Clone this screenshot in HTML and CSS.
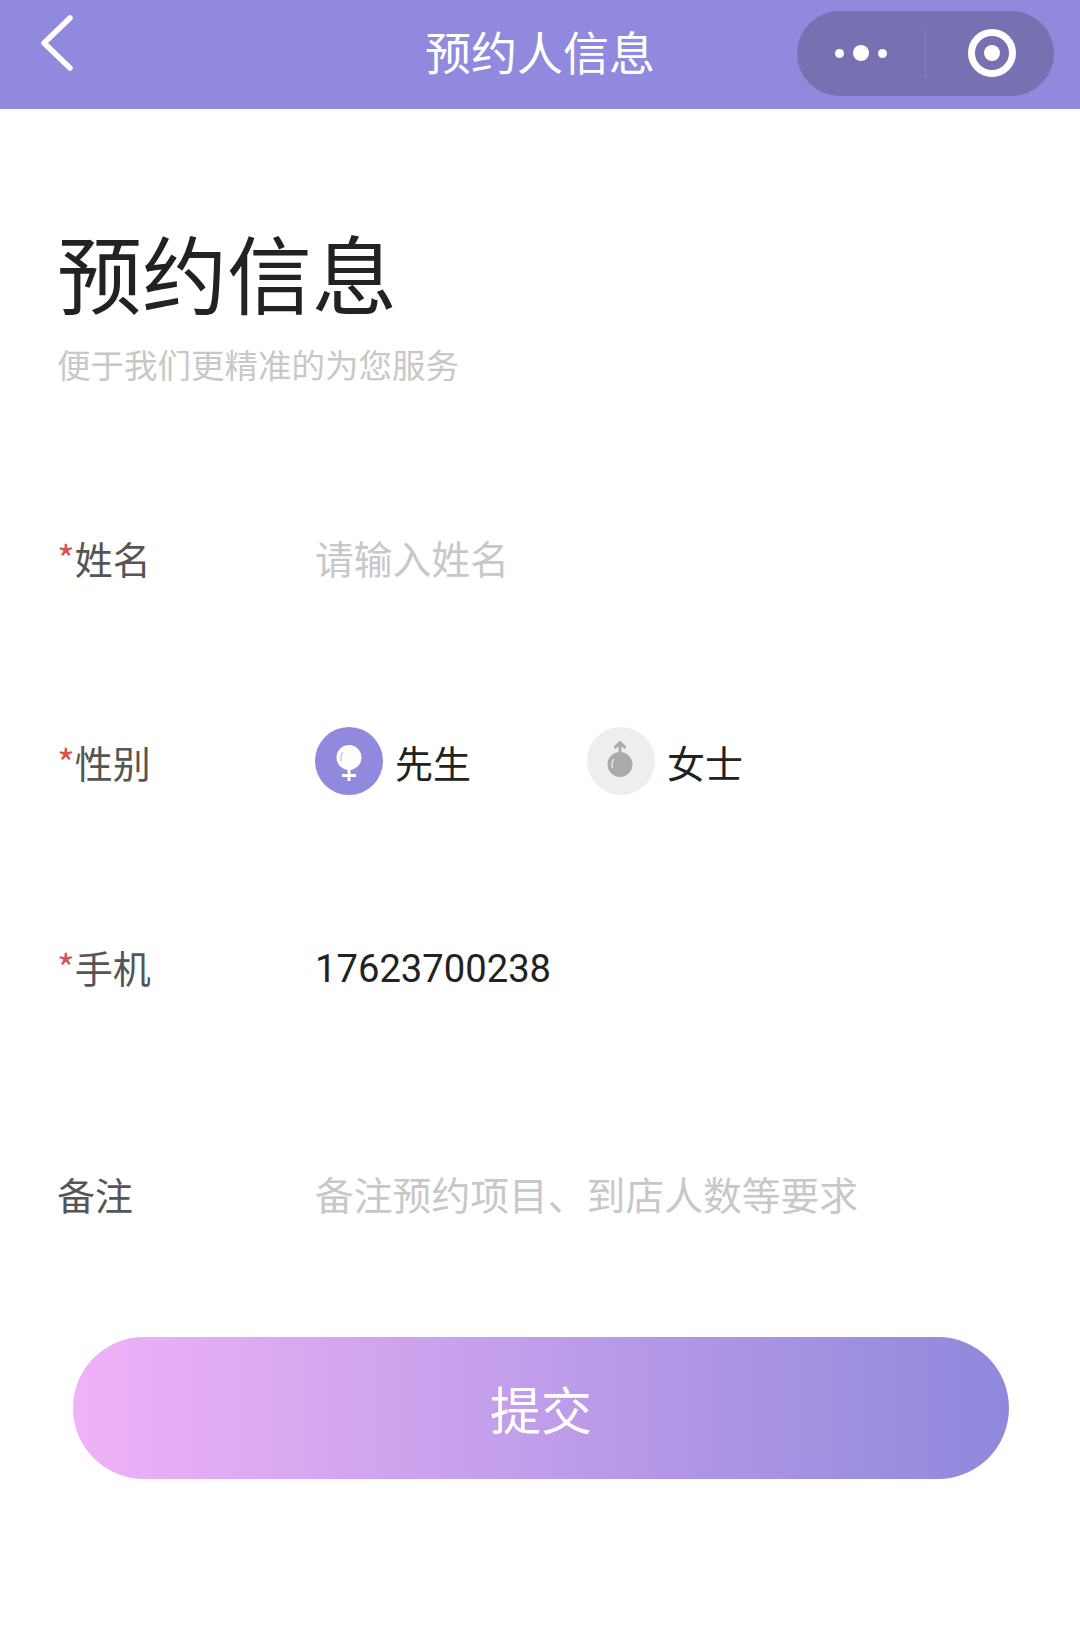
FILE: index.html
```html
<!DOCTYPE html>
<html>
<head>
    <meta charset="utf-8">
    <link rel="stylesheet" href="styles.css">
</head>
<body>
    <div class="nav-bar">
        <svg class="back-icon" width="32" height="56" viewBox="0 0 32 56">
            <path d="M29 3 L3 28 L29 53"/>
        </svg>
        <div class="nav-title">预约人信息</div>
        <div class="capsule">
            <div class="capsule-dots">
                <span class="dot"></span>
                <span class="dot dot-big"></span>
                <span class="dot"></span>
            </div>
            <div class="capsule-line"></div>
            <div class="capsule-close">
                <span class="close-inner"></span>
            </div>
        </div>
    </div>

    <div class="intro">
        <h1>预约信息</h1>
        <p>便于我们更精准的为您服务</p>
    </div>

    <div class="form">
        <div class="form-row row-name">
            <label><span class="required-tag">*</span>姓名</label>
            <div class="placeholder">请输入姓名</div>
        </div>
        <div class="form-row row-gender">
            <label><span class="required-tag">*</span>性别</label>
            <div class="gender-list">
                <div class="gender-item">
                    <span class="gender-icon active">
                        <svg class="female-icon" width="28" height="36" viewBox="0 0 28 36">
                            <circle cx="14" cy="12.5" r="12.5" fill="#fff"/>
                            <path d="M14 24 V36 M7 30.5 H21" stroke="#fff" stroke-width="3" fill="none"/>
                            <path d="M6.5 16 Q5 11 8 7" stroke="#c9c4ee" stroke-width="1.5" fill="none"/>
                        </svg>
                    </span>
                    <span>先生</span>
                </div>
                <div class="gender-item">
                    <span class="gender-icon">
                        <svg class="male-icon" width="28" height="36" viewBox="0 0 28 36">
                            <circle cx="14" cy="23.5" r="12.5" fill="#aaa"/>
                            <path d="M14 12 V2 M8.5 7 L14 1.5 L19.5 7" stroke="#aaa" stroke-width="3" fill="none"/>
                            <path d="M6.5 27 Q5 22 8 18" stroke="#e6e6e6" stroke-width="1.5" fill="none"/>
                        </svg>
                    </span>
                    <span>女士</span>
                </div>
            </div>
        </div>
        <div class="form-row row-phone">
            <label><span class="required-tag">*</span>手机</label>
            <div class="value">17623700238</div>
        </div>
        <div class="form-row row-remark">
            <label>备注</label>
            <div class="placeholder">备注预约项目、到店人数等要求</div>
        </div>
    </div>

    <button class="submit-btn">提交</button>
</body>
</html>
```

FILE: styles.css
```css
body {
    margin: 0;
    height: 1652px;
    overflow: hidden;
    background: #fff;
    font-family: "Noto Sans CJK SC", "Noto Sans", sans-serif;
    color: #222;
}

.nav-bar {
    position: relative;
    display: flex;
    align-items: center;
    justify-content: space-between;
    box-sizing: border-box;
    height: 109px;
    padding: 0 26px 0 41px;
    background: #9089de;
}

.back-icon {
    align-self: flex-start;
    margin-top: 15px;
}

.back-icon path {
    fill: none;
    stroke: #fff;
    stroke-width: 5.5;
    stroke-linecap: round;
    stroke-linejoin: round;
}

.nav-title {
    position: absolute;
    left: 0;
    right: 0;
    top: 19px;
    text-align: center;
    font-size: 46px;
    line-height: 62px;
    color: #fff;
}

.capsule {
    display: flex;
    align-items: center;
    width: 257px;
    height: 85px;
    margin-top: -3px;
    border-radius: 43px;
    background: #7771b1;
}

.capsule-dots {
    display: flex;
    align-items: center;
    justify-content: center;
    gap: 9px;
    width: 128px;
}

.dot {
    width: 9px;
    height: 9px;
    border-radius: 50%;
    background: #fff;
}

.dot-big {
    width: 16px;
    height: 16px;
}

.capsule-line {
    width: 1px;
    height: 50px;
    background: #8680bf;
}

.capsule-close {
    display: flex;
    align-items: center;
    justify-content: center;
    flex: 1;
    padding-left: 4px;
}

.close-inner {
    box-sizing: border-box;
    width: 48px;
    height: 48px;
    border: 7px solid #fff;
    border-radius: 50%;
    position: relative;
}

.close-inner::after {
    content: "";
    position: absolute;
    left: 9px;
    top: 9px;
    width: 16px;
    height: 16px;
    border-radius: 50%;
    background: #fff;
}

.intro {
    padding: 101px 0 0 57px;
}

.intro h1 {
    margin: 0;
    font-size: 85px;
    font-weight: 400;
    line-height: 122px;
    color: #222;
}

.intro p {
    margin: 7px 0 0;
    font-size: 33.5px;
    line-height: 50px;
    color: #c8c8c8;
}

.form {
    padding: 134px 0 0 57px;
}

.form-row {
    display: flex;
    align-items: center;
    height: 68px;
}

.row-gender {
    margin-top: 136px;
}

.row-phone {
    margin-top: 137px;
}

.row-remark {
    margin-top: 159px;
}

.form-row label {
    width: 258px;
    flex-shrink: 0;
    font-size: 38px;
    color: #555;
}

.required-tag {
    color: #d9534f;
}

.placeholder {
    font-size: 38.8px;
    color: #c8c8c8;
}

.value {
    padding-top: 6px;
    font-family: "Roboto", "Noto Sans", sans-serif;
    font-size: 38.2px;
    color: #222;
}

.gender-list {
    display: flex;
}

.gender-item {
    display: flex;
    align-items: center;
    gap: 12px;
    width: 272px;
    font-size: 38px;
    color: #222;
}

.gender-icon {
    display: flex;
    align-items: center;
    justify-content: center;
    width: 68px;
    height: 68px;
    border-radius: 50%;
    background: #eee;
}

.gender-icon.active {
    background: #9089de;
}

.female-icon {
    margin-top: 4px;
}

.male-icon {
    margin: 0 3px 4px 0;
}

.submit-btn {
    display: block;
    width: 936px;
    height: 142px;
    margin: 110px 0 0 73px;
    border: none;
    border-radius: 71px;
    background: linear-gradient(90deg, #f0b2f8, #8f88dc);
    font-family: inherit;
    font-size: 51px;
    color: #fff;
}
```
